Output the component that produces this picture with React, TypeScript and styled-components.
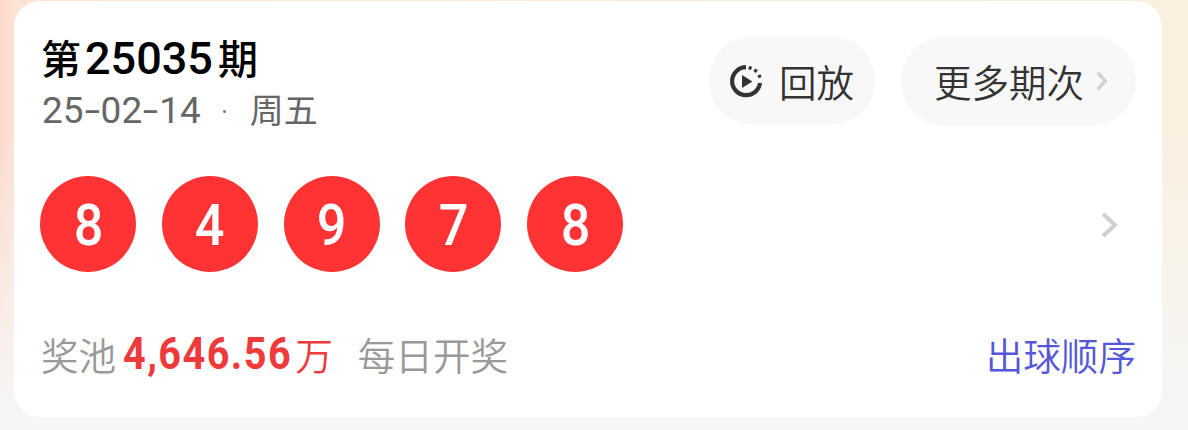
import React from "react";
import styled, { createGlobalStyle } from "styled-components";

const CJK = '"Noto Sans CJK SC", sans-serif';

const Global = createGlobalStyle`
  html, body { margin: 0; padding: 0; width: 1188px; height: 430px; overflow: hidden; }
  #root { width: 1188px; height: 430px; }
`;

const Page = styled.div`
  box-sizing: border-box;
  width: 1188px;
  height: 430px;
  padding: 1px 26px 13px 14px;
  background:
    linear-gradient(to bottom, rgba(246,246,246,0) 0%, rgba(246,246,246,0) 30%, #f6f6f6 97%),
    linear-gradient(to right, #fdd8ca 0px, #fde3d6 14px, #faf0e0 1162px, #faf0e0 100%);
  font-family: Inter, ${CJK};
`;

const Card = styled.main`
  box-sizing: border-box;
  height: 100%;
  background: #fff;
  border-radius: 26px;
  padding: 35px 26px 0 26px;
  display: flex;
  flex-direction: column;
`;

const Header = styled.header`
  display: flex;
  justify-content: space-between;
  align-items: flex-start;
  height: 140px;
`;

const TitleBlock = styled.div`
  display: flex;
  flex-direction: column;
  padding-left: 2px;
`;

const Title = styled.h1`
  margin: 0 0 0 -1px;
  height: 50px;
  font: 500 40px/50px Roboto, ${CJK};
  color: #000;
  white-space: nowrap;
`;

const TitleDigits = styled.span`
  font-size: 45px;
  line-height: 40px;
  margin: 0 5px 0 4px;
`;

const DateLine = styled.div`
  margin-top: 2px;
  font: 400 37px/46px Roboto, ${CJK};
  color: #666;
  white-space: nowrap;
  display: flex;
  align-items: center;
`;

const DateDash = styled.span`
  display: inline-block;
  width: 17px;
  text-align: center;
  transform: scaleX(1.5);
`;

const DateDay = styled.span`
  font-size: 34px;
`;

const Dot = styled.span`
  width: 3px;
  height: 3px;
  border-radius: 50%;
  background: #777;
  margin: 0 24px 0 22px;
`;

const Actions = styled.div`
  display: flex;
  gap: 26px;
  align-items: flex-start;
`;

const Pill = styled.button<{ $w: number; $h: number }>`
  box-sizing: border-box;
  width: ${(p) => p.$w}px;
  height: ${(p) => p.$h}px;
  border: 0;
  border-radius: 45px;
  background: #f8f8f8;
  color: #333;
  font: 350 37.5px/1 ${CJK};
  display: flex;
  align-items: center;
  padding: 0;
`;

const ReplayIcon = styled.svg`
  width: 34px;
  height: 34px;
  margin-left: 20px;
  margin-right: 16px;
  flex: none;
`;

const MoreLabel = styled.span`
  margin-left: 33px;
  margin-right: 11px;
`;

const Row = styled.section`
  display: flex;
  align-items: center;
  justify-content: space-between;
  height: 96px;
`;

const Balls = styled.div`
  display: flex;
  gap: 25.75px;
`;

const Ball = styled.div`
  width: 96px;
  height: 96px;
  border-radius: 50%;
  background: #ff3333;
  color: #fff;
  font: 500 58px/98px Roboto, sans-serif;
  text-align: center;
`;

const BallDigit = styled.span`
  display: inline-block;
  transform: scaleX(0.9);
`;

const RowChevron = styled.div`
  margin: 2px 18px 0 0;
  flex: none;
`;

const Footer = styled.footer`
  display: flex;
  align-items: center;
  justify-content: space-between;
  margin-top: 59px;
  height: 46px;
  font: 350 37.6px/46px ${CJK};
`;

const Info = styled.div`
  display: flex;
  align-items: center;
  color: #999;
  padding-left: 1px;
  white-space: nowrap;
`;

const Jackpot = styled.span`
  display: flex;
  align-items: center;
  color: #ee3a3a;
  margin-left: 7px;
  margin-right: 25px;
`;

const Amount = styled.span`
  display: inline-block;
  width: 172px;
  font: 700 44px/46px Roboto, sans-serif;
  letter-spacing: 1.6px;
  transform: scaleX(0.9);
  transform-origin: left center;
`;

const OrderLink = styled.a`
  color: #5557d9;
  white-space: nowrap;
`;

const Arrow = ({ w, h, color, sw }: { w: number; h: number; color: string; sw: number }) => (
  <svg width={w} height={h} viewBox={`0 0 ${w} ${h}`} fill="none" style={{ display: "block" }}>
    <path d={`M${sw / 2 + 1} ${sw / 2} L${w - sw / 2 - 1} ${h / 2} L${sw / 2 + 1} ${h - sw / 2}`} stroke={color} strokeWidth={sw} />
  </svg>
);

export default function App() {
  return (
    <>
      <Global />
      <Page>
        <Card>
          <Header>
            <TitleBlock>
              <Title>第<TitleDigits>25035</TitleDigits>期</Title>
              <DateLine>
                25<DateDash>-</DateDash>02<DateDash>-</DateDash>14
                <Dot />
                <DateDay>周五</DateDay>
              </DateLine>
            </TitleBlock>
            <Actions>
              <Pill $w={166} $h={89}>
                <ReplayIcon viewBox="0 0 34 34" fill="none">
                  <path d="M17 3.2 A14 14 0 1 0 31 19" stroke="#333" strokeWidth="4.2" />
                  <path d="M21.6 2.4 l-1 3.2 M27.6 5.4 l-2 2.6 M32 11.6 l-3 1.2" stroke="#333" strokeWidth="3" />
                  <path d="M13 11 L23.4 17.5 L13 24 Z" fill="#333" />
                </ReplayIcon>
                回放
              </Pill>
              <Pill $w={235} $h={90}>
                <MoreLabel>更多期次</MoreLabel>
                <Arrow w={13} h={20} color="#d2d2d2" sw={3.4} />
              </Pill>
            </Actions>
          </Header>
          <Row>
            <Balls>
              {[8, 4, 9, 7, 8].map((n, i) => (
                <Ball key={i}><BallDigit>{n}</BallDigit></Ball>
              ))}
            </Balls>
            <RowChevron>
              <Arrow w={18} h={26} color="#cfcfcf" sw={4} />
            </RowChevron>
          </Row>
          <Footer>
            <Info>
              奖池
              <Jackpot>
                <Amount>4,646.56</Amount>
                万
              </Jackpot>
              每日开奖
            </Info>
            <OrderLink>出球顺序</OrderLink>
          </Footer>
        </Card>
      </Page>
    </>
  );
}
